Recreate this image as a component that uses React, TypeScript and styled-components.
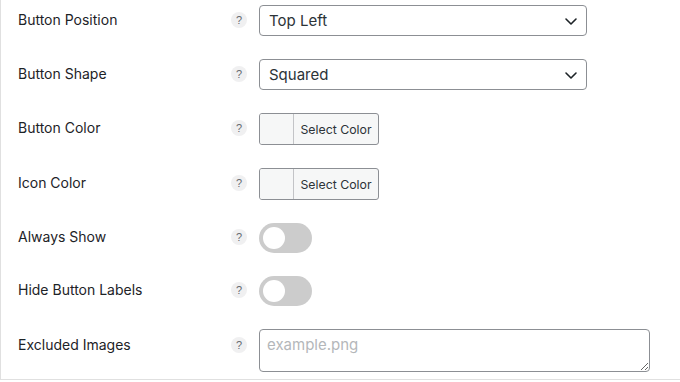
import React from "react";
import styled, { createGlobalStyle } from "styled-components";

const Global = createGlobalStyle`
  html, body { margin: 0; padding: 0; background: #fff; }
  body { font-family: Inter, "Liberation Sans", Arial, sans-serif; color: #1d2327; }
  * { box-sizing: border-box; }
`;

const Panel = styled.div`
  width: 680px;
  height: 380px;
  background: #fff;
  border-left: 1px solid #e0e0e0;
  border-bottom: 1px solid #e0e0e0;
  padding-top: 5px;
  display: flex;
  flex-direction: column;
  gap: 23px;
`;

const Row = styled.div<{ $h: number; $top?: boolean }>`
  display: grid;
  grid-template-columns: 213px 28px 1fr;
  padding-left: 17px;
  height: ${(p) => p.$h}px;
  align-items: ${(p) => (p.$top ? "start" : "center")};
`;

const Label = styled.div<{ $top?: boolean }>`
  font-size: 14px;
  line-height: ${(p) => (p.$top ? "30px" : "20px")};
  color: #1d2327;
  margin-top: ${(p) => (p.$top ? "1px" : "-2px")};
`;

const HelpWrap = styled.div<{ $top?: boolean }>`
  height: ${(p) => (p.$top ? "30px" : "auto")};
  display: flex;
  align-items: center;
  margin-top: ${(p) => (p.$top ? "1px" : "-2px")};
`;

const Help = styled.span`
  width: 16px;
  height: 16px;
  border-radius: 50%;
  background: #f0f0f1;
  color: #646970;
  font-size: 11px;
  line-height: 16px;
  text-align: center;
  font-family: "Liberation Sans", Arial, sans-serif;
`;

const Select = styled.div`
  width: 328px;
  height: 31px;
  border: 1px solid #8c8f94;
  border-radius: 4px;
  display: flex;
  align-items: center;
  justify-content: space-between;
  padding: 0 8px 0 9px;
  font-size: 15px;
  color: #2c3338;
`;

const ColorButton = styled.div`
  width: 120px;
  height: 32px;
  border: 1px solid #8c8f94;
  border-radius: 3px;
  background: #f6f7f7;
  display: flex;
  overflow: hidden;
`;

const Swatch = styled.span`
  width: 34px;
  border-right: 1px solid #c3c4c7;
  background: #f6f7f7;
`;

const ColorText = styled.span`
  flex: 1;
  display: flex;
  align-items: center;
  justify-content: center;
  font-size: 12.3px;
  color: #2c3338;
`;

const Toggle = styled.div`
  width: 53px;
  height: 30px;
  border-radius: 15px;
  background: #cccccc;
  padding: 4px;
  display: flex;
  align-items: center;
`;

const Knob = styled.span`
  width: 22px;
  height: 22px;
  border-radius: 50%;
  background: #fff;
`;

const Area = styled.textarea`
  width: 391px;
  height: 43px;
  border: 1px solid #8c8f94;
  border-radius: 4px;
  padding: 4px 7px;
  font-family: Inter, "Liberation Sans", Arial, sans-serif;
  font-size: 15px;
  line-height: 22px;
  color: #2c3338;
  outline: none;
  &::placeholder { color: #b4b7ba; }
`;

const Chevron = () => (
  <svg width="14" height="14" viewBox="0 0 14 14" fill="none">
    <polyline points="2,5 7,10 12,5" stroke="#1d2327" strokeWidth="1.6" strokeLinecap="round" strokeLinejoin="round" />
  </svg>
);

export default function App() {
  return (
    <>
      <Global />
      <Panel>
        <Row $h={31}>
          <Label>Button Position</Label>
          <HelpWrap><Help>?</Help></HelpWrap>
          <Select><span>Top Left</span><Chevron /></Select>
        </Row>
        <Row $h={31}>
          <Label>Button Shape</Label>
          <HelpWrap><Help>?</Help></HelpWrap>
          <Select><span>Squared</span><Chevron /></Select>
        </Row>
        <Row $h={32}>
          <Label>Button Color</Label>
          <HelpWrap><Help>?</Help></HelpWrap>
          <ColorButton><Swatch /><ColorText>Select Color</ColorText></ColorButton>
        </Row>
        <Row $h={32}>
          <Label>Icon Color</Label>
          <HelpWrap><Help>?</Help></HelpWrap>
          <ColorButton><Swatch /><ColorText>Select Color</ColorText></ColorButton>
        </Row>
        <Row $h={30}>
          <Label>Always Show</Label>
          <HelpWrap><Help>?</Help></HelpWrap>
          <Toggle><Knob /></Toggle>
        </Row>
        <Row $h={30}>
          <Label>Hide Button Labels</Label>
          <HelpWrap><Help>?</Help></HelpWrap>
          <Toggle><Knob /></Toggle>
        </Row>
        <Row $h={43} $top>
          <Label $top>Excluded Images</Label>
          <HelpWrap $top><Help>?</Help></HelpWrap>
          <Area placeholder="example.png" />
        </Row>
      </Panel>
    </>
  );
}
